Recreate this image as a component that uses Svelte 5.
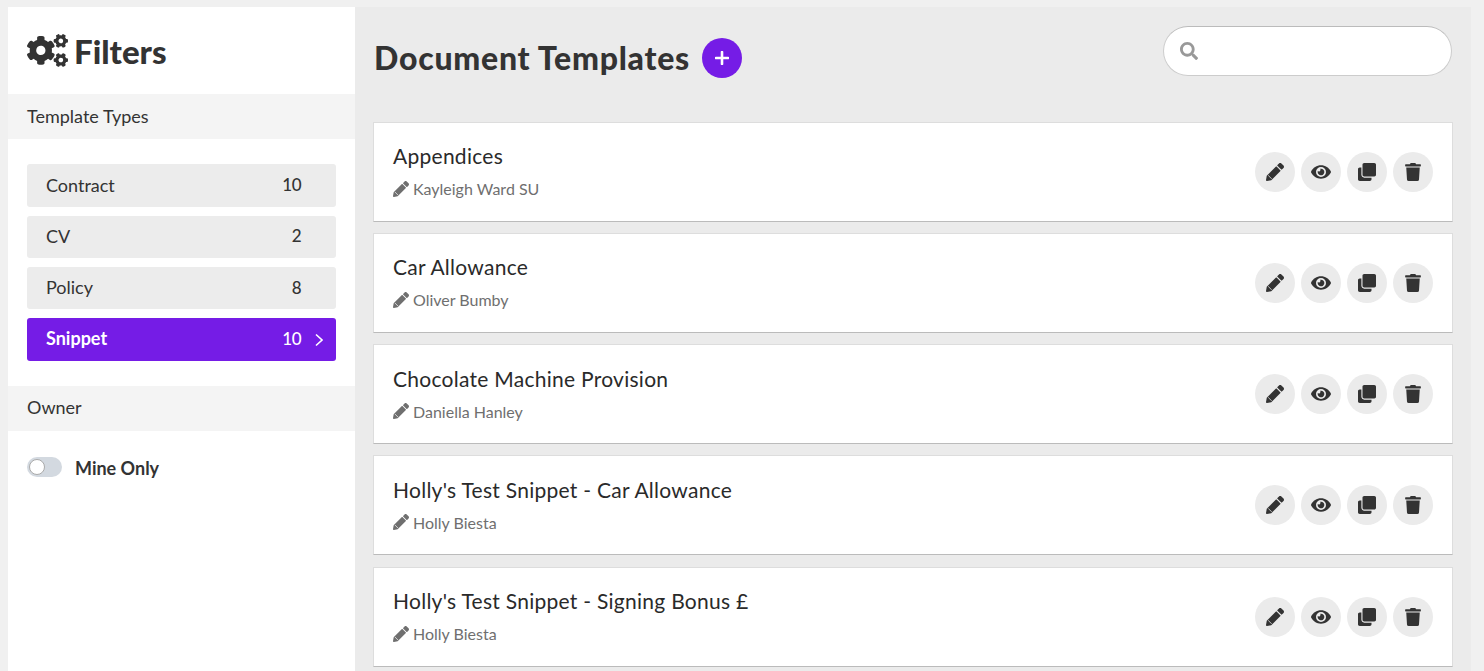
<script lang="ts">
	const types = [
		{ name: 'Contract', count: 10, active: false },
		{ name: 'CV', count: 2, active: false },
		{ name: 'Policy', count: 8, active: false },
		{ name: 'Snippet', count: 10, active: true }
	];

	const templates = [
		{ title: 'Appendices', owner: 'Kayleigh Ward SU' },
		{ title: 'Car Allowance', owner: 'Oliver Bumby' },
		{ title: 'Chocolate Machine Provision', owner: 'Daniella Hanley' },
		{ title: "Holly's Test Snippet - Car Allowance", owner: 'Holly Biesta' },
		{ title: "Holly's Test Snippet - Signing Bonus £", owner: 'Holly Biesta' }
	];

	const pencil =
		'M497.9 142.1l-46.1 46.1c-4.7 4.7-12.3 4.7-17 0l-111-111c-4.7-4.7-4.7-12.3 0-17l46.1-46.1c18.7-18.7 49.1-18.7 67.9 0l60.1 60.1c18.8 18.7 18.8 49.1 0 67.9zM284.2 99.8L21.6 362.4.4 483.9c-2.9 16.4 11.4 30.6 27.8 27.8l121.5-21.3 262.6-262.6c4.7-4.7 4.7-12.3 0-17l-111-111c-4.8-4.7-12.4-4.7-17.1 0z';
	// the cut that sets the pencil's point off from its body
	const pencilTip = 'M62 352 160 450';

	const actions = [
		{ label: 'Edit', box: '0 0 512 512', size: 18, d: pencil, tip: true },
		{
			label: 'Preview',
			box: '0 0 576 512',
			size: 20,
			d: 'M572.52 241.4C518.29 135.59 410.93 64 288 64S57.68 135.64 3.48 241.41a32.35 32.35 0 0 0 0 29.19C57.71 376.41 165.07 448 288 448s230.32-71.64 284.52-177.41a32.35 32.35 0 0 0 0-29.19zM288 400a144 144 0 1 1 144-144 143.93 143.93 0 0 1-144 144zm0-240a95.31 95.31 0 0 0-25.31 3.79 47.85 47.85 0 0 1-66.9 66.9A95.78 95.78 0 1 0 288 160z'
		},
		{
			label: 'Copy',
			box: '0 0 512 512',
			size: 18,
			d: 'M464 0c26.51 0 48 21.49 48 48v288c0 26.51-21.49 48-48 48H176c-26.51 0-48-21.49-48-48V48c0-26.51 21.49-48 48-48h288M176 416c-44.112 0-80-35.888-80-80V128H48c-26.51 0-48 21.49-48 48v288c0 26.51 21.49 48 48 48h288c26.51 0 48-21.49 48-48v-48H176z'
		},
		{
			label: 'Delete',
			box: '0 0 448 512',
			size: 18,
			d: 'M432 32H312l-9.4-18.7A24 24 0 0 0 281.1 0H166.8a23.72 23.72 0 0 0-21.4 13.3L136 32H16A16 16 0 0 0 0 48v32a16 16 0 0 0 16 16h416a16 16 0 0 0 16-16V48a16 16 0 0 0-16-16zM53.2 467a48 48 0 0 0 47.9 45h245.8a48 48 0 0 0 47.9-45L416 128H32z'
		}
	];
</script>

<div class="page">
	<aside class="sidebar">
		<h2 class="filters-title">
			<svg class="cogs" viewBox="0 0 640 512" aria-hidden="true">
				<path d="M512.1 191l-8.2 14.3c-3 5.3-9.4 7.5-15.1 5.4-11.8-4.4-22.6-10.7-32.1-18.6-4.6-3.8-5.8-10.5-2.8-15.7l8.2-14.3c-6.9-8-12.3-17.3-15.9-27.4h-16.5c-6 0-11.2-4.3-12.2-10.3-2-12-2.1-24.6 0-37.1 1-6 6.2-10.4 12.2-10.4h16.5c3.6-10.1 9-19.4 15.9-27.4l-8.2-14.3c-3-5.2-1.9-11.9 2.8-15.7 9.5-7.9 20.4-14.2 32.1-18.6 5.7-2.1 12.1.1 15.1 5.4l8.2 14.3c10.5-1.9 21.2-1.9 31.7 0L552 6.3c3-5.3 9.4-7.5 15.1-5.4 11.8 4.4 22.6 10.7 32.1 18.6 4.6 3.8 5.8 10.5 2.8 15.7l-8.2 14.3c6.9 8 12.3 17.3 15.9 27.4h16.5c6 0 11.2 4.3 12.2 10.3 2 12 2.1 24.6 0 37.1-1 6-6.2 10.4-12.2 10.4h-16.5c-3.6 10.1-9 19.4-15.9 27.4l8.2 14.3c3 5.2 1.9 11.9-2.8 15.7-9.5 7.9-20.4 14.2-32.1 18.6-5.7 2.1-12.1-.1-15.1-5.4l-8.2-14.3c-10.4 1.9-21.2 1.9-31.7 0zm-10.5-58.8c38.5 29.6 82.4-14.3 52.8-52.8-38.5-29.7-82.4 14.3-52.8 52.8zM386.3 286.1l33.7 16.8c10.1 5.8 14.5 18.1 10.5 29.1-8.9 24.2-26.4 46.4-42.6 65.8-7.4 8.9-20.2 11.1-30.3 5.3l-29.1-16.8c-16 13.7-34.6 24.6-54.9 31.7v33.6c0 11.6-8.3 21.6-19.7 23.6-24.6 4.2-50.4 4.4-75.9 0-11.5-2-20-11.9-20-23.6V418c-20.3-7.2-38.9-18-54.9-31.7L74 403c-10 5.8-22.9 3.6-30.3-5.3-16.2-19.4-33.3-41.6-42.2-65.7-4-10.9.4-23.2 10.5-29.1l33.3-16.8c-3.9-20.9-3.9-42.4 0-63.4L12 205.8c-10.1-5.8-14.6-18.1-10.5-29 8.9-24.2 26-46.4 42.2-65.8 7.4-8.9 20.2-11.1 30.3-5.3l29.1 16.8c16-13.7 34.6-24.6 54.9-31.7V57.1c0-11.5 8.2-21.5 19.6-23.5 24.6-4.2 50.5-4.4 76-.1 11.5 2 20 11.9 20 23.6v33.6c20.3 7.2 38.9 18 54.9 31.7l29.1-16.8c10-5.8 22.9-3.6 30.3 5.3 16.2 19.4 33.2 41.6 42.1 65.8 4 10.9.1 23.2-10 29.1l-33.7 16.8c3.9 21 3.9 42.5 0 63.5zm-117.6 21.1c59.2-77-28.7-164.9-105.7-105.7-59.2 77 28.7 164.9 105.7 105.7zm243.4 182.7l-8.2 14.3c-3 5.3-9.4 7.5-15.1 5.4-11.8-4.4-22.6-10.7-32.1-18.6-4.6-3.8-5.8-10.5-2.8-15.7l8.2-14.3c-6.9-8-12.3-17.3-15.9-27.4h-16.5c-6 0-11.2-4.3-12.2-10.3-2-12-2.1-24.6 0-37.1 1-6 6.2-10.4 12.2-10.4h16.5c3.6-10.1 9-19.4 15.9-27.4l-8.2-14.3c-3-5.2-1.9-11.9 2.8-15.7 9.5-7.9 20.4-14.2 32.1-18.6 5.7-2.1 12.1.1 15.1 5.4l8.2 14.3c10.5-1.9 21.2-1.9 31.7 0l8.2-14.3c3-5.3 9.4-7.5 15.1-5.4 11.8 4.4 22.6 10.7 32.1 18.6 4.6 3.8 5.8 10.5 2.8 15.7l-8.2 14.3c6.9 8 12.3 17.3 15.9 27.4h16.5c6 0 11.2 4.3 12.2 10.3 2 12 2.1 24.6 0 37.1-1 6-6.2 10.4-12.2 10.4h-16.5c-3.6 10.1-9 19.4-15.9 27.4l8.2 14.3c3 5.2 1.9 11.9-2.8 15.7-9.5 7.9-20.4 14.2-32.1 18.6-5.7 2.1-12.1-.1-15.1-5.4l-8.2-14.3c-10.4 1.9-21.2 1.9-31.7 0zM501.6 431c38.5 29.6 82.4-14.3 52.8-52.8-38.5-29.6-82.4 14.3-52.8 52.8z" />
			</svg>
			Filters
		</h2>

		<div class="band">Template Types</div>
		<ul class="types">
			{#each types as t}
				<li class="type" class:active={t.active}>
					<span class="type-name">{t.name}</span>
					<span class="type-count">{t.count}</span>
					<span class="type-arrow">
						{#if t.active}
							<svg viewBox="0 0 8 14" width="8" height="14" aria-hidden="true">
								<path d="M1 1.5 7 7l-6 5.5" fill="none" stroke="#fff" stroke-width="1.6" />
							</svg>
						{/if}
					</span>
				</li>
			{/each}
		</ul>

		<div class="band">Owner</div>
		<div class="owner">
			<span class="toggle"><span class="knob"></span></span>
			<span class="mine">Mine Only</span>
		</div>
	</aside>

	<main class="content">
		<header class="head">
			<h1>Document Templates</h1>
			<button class="add" aria-label="Add template">
				<svg viewBox="0 0 14 14" width="14" height="14" aria-hidden="true">
					<path d="M7 1v12M1 7h12" stroke="#fff" stroke-width="2.6" stroke-linecap="round" />
				</svg>
			</button>
			<div class="search">
				<svg viewBox="0 0 512 512" width="18" height="18" aria-hidden="true">
					<path d="M505 442.7L405.3 343c-4.5-4.5-10.6-7-17-7H372c27.6-35.3 44-79.7 44-128C416 93.1 322.9 0 208 0S0 93.1 0 208s93.1 208 208 208c48.3 0 92.7-16.4 128-44v16.3c0 6.4 2.5 12.5 7 17l99.7 99.7c9.4 9.4 24.6 9.4 33.9 0l28.3-28.3c9.4-9.4 9.4-24.6.1-34zM208 336c-70.7 0-128-57.2-128-128 0-70.7 57.2-128 128-128 70.7 0 128 57.2 128 128 0 70.7-57.2 128-128 128z" />
				</svg>
			</div>
		</header>

		<div class="cards">
			{#each templates as t}
				<article class="card">
					<div class="info">
						<div class="title">{t.title}</div>
						<div class="by">
							<svg viewBox="0 0 512 512" width="16" height="16" aria-hidden="true">
								<path d={pencil} />
								<path class="tip" d={pencilTip} />
							</svg>
							{t.owner}
						</div>
					</div>
					<div class="actions">
						{#each actions as a}
							<button class="action" aria-label={a.label}>
								<svg viewBox={a.box} width={a.size} height={a.size} aria-hidden="true">
									<path d={a.d} />
									{#if a.tip}<path class="tip" d={pencilTip} />{/if}
								</svg>
							</button>
						{/each}
					</div>
				</article>
			{/each}
		</div>
	</main>
</div>

<style>
	:global(body) {
		margin: 0;
		background: #f0f0f0;
	}

	.page {
		display: flex;
		height: 664px;
		padding: 7px 13px 0 8px;
		overflow: hidden;
		font-family: Lato, 'Liberation Sans', sans-serif;
		color: #333;
	}

	.sidebar {
		width: 347px;
		flex-shrink: 0;
		background: #fff;
	}

	.filters-title {
		display: flex;
		align-items: center;
		gap: 6px;
		height: 87px;
		margin: 0;
		padding-left: 19px;
		font-size: 33px;
		font-weight: 900;
		box-sizing: border-box;
		color: #333;
	}

	.cogs {
		width: 41px;
		height: 33px;
		fill: #333;
	}

	.band {
		display: flex;
		align-items: center;
		height: 45px;
		padding: 0 0 2px 19px;
		box-sizing: border-box;
		background: #f4f4f4;
		font-size: 18px;
	}

	.types {
		list-style: none;
		margin: 0;
		padding: 25.4px 19px 25.3px;
		display: flex;
		flex-direction: column;
		gap: 8.5px;
	}

	.type {
		display: flex;
		align-items: center;
		height: 42.7px;
		padding: 0 13px 2px 19px;
		box-sizing: border-box;
		background: #ececec;
		border-radius: 3px;
		font-size: 18px;
	}

	.type.active {
		background: #751ce6;
		color: #fff;
		font-weight: 700;
	}

	.type-name {
		flex: 1;
	}

	.type-count {
		font-size: 17px;
		font-weight: 500;
		letter-spacing: -0.5px;
	}

	.type-arrow {
		display: flex;
		width: 8px;
		margin-left: 14px;
		padding-top: 3px;
	}

	.owner {
		display: flex;
		align-items: center;
		gap: 13px;
		padding: 24px 19px;
	}

	.toggle {
		display: flex;
		align-items: center;
		width: 35px;
		height: 20px;
		padding-left: 2px;
		box-sizing: border-box;
		background: #d3d9e0;
		border-radius: 10px;
	}

	.knob {
		width: 16px;
		height: 16px;
		background: #fff;
		border: 1px solid #aaa;
		border-radius: 50%;
		box-sizing: border-box;
	}

	.mine {
		padding-top: 2px;
		font-size: 18px;
		font-weight: 700;
	}

	.content {
		flex: 1;
		min-width: 0;
		background: #ebebeb;
		padding: 0 19px;
	}

	.head {
		display: flex;
		align-items: center;
		height: 114.55px;
		padding-bottom: 13.55px;
		box-sizing: border-box;
	}

	h1 {
		margin: 0 12px 0 0;
		font-size: 32px;
		font-weight: 900;
		letter-spacing: 0.75px;
		color: #333;
	}

	.add {
		display: flex;
		align-items: center;
		justify-content: center;
		width: 40px;
		height: 40px;
		padding: 0;
		border: 0;
		border-radius: 50%;
		background: #751ce6;
	}

	.search {
		display: flex;
		align-items: center;
		width: 289px;
		height: 50px;
		margin: -14px 0 0 auto;
		padding-left: 16px;
		box-sizing: border-box;
		background: #fff;
		border: 1px solid #ccc;
		border-top-color: #bbb;
		border-radius: 25px;
		fill: #999;
	}

	.cards {
		display: flex;
		flex-direction: column;
		gap: 11.25px;
		margin: 0 -1px;
	}

	.card {
		display: flex;
		align-items: center;
		justify-content: space-between;
		flex-shrink: 0;
		height: 100px;
		padding: 0 19px;
		box-sizing: border-box;
		background: #fff;
		border: 1px solid #ddd;
		border-bottom-color: #bbb;
	}

	.info {
		padding-bottom: 3px;
	}

	.title {
		font-size: 21px;
		letter-spacing: 0.27px;
		line-height: 28px;
		color: #2a2a2a;
	}

	.by {
		display: flex;
		align-items: center;
		gap: 4px;
		margin-top: 9px;
		font-size: 16px;
		color: #6f6f6f;
		fill: #6f6f6f;
	}

	.tip {
		fill: none;
		stroke: #fff;
		stroke-width: 22;
	}

	.action .tip {
		stroke: #ebebeb;
	}

	.actions {
		display: flex;
		gap: 6px;
	}

	.action {
		display: flex;
		align-items: center;
		justify-content: center;
		width: 40px;
		height: 40px;
		padding: 0;
		border: 0;
		border-radius: 50%;
		background: #ebebeb;
		fill: #333;
	}
</style>
